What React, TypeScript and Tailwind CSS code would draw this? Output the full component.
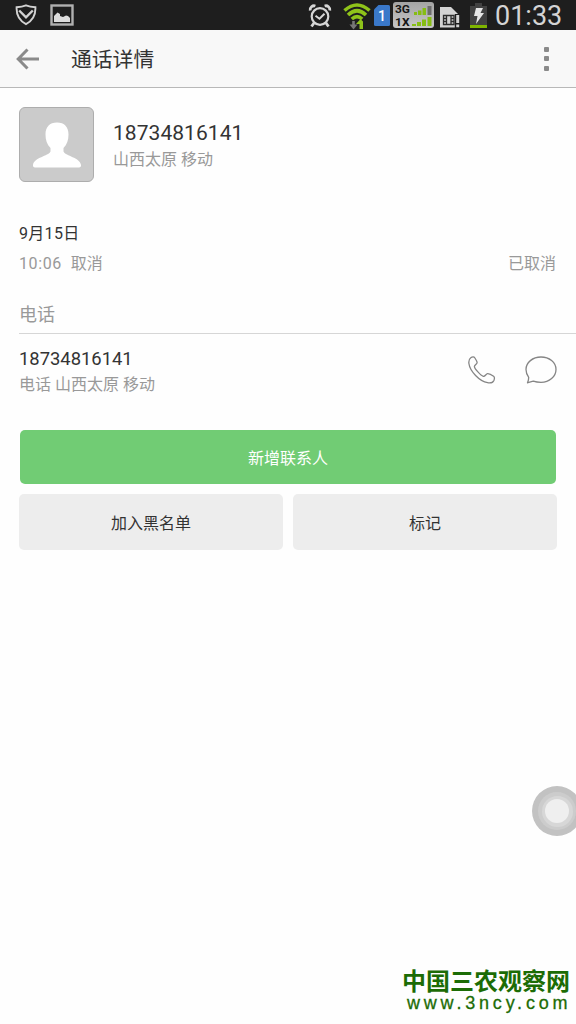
import React from 'react';

const ShieldIcon = () => (
  <svg width="22" height="22" viewBox="0 0 22 22" fill="none" stroke="#d2d2d2" strokeWidth="1.9">
    <path d="M11 1.4C8.2 2.6 5 3.1 1.6 3.2c-.4 7.4 2.2 13.2 9.4 17 7.2-3.8 9.8-9.6 9.4-17C17 3.1 13.8 2.6 11 1.4z" />
    <path d="M4.2 6.5l6.8 6.8 6.8-6.8" strokeWidth="2.4" />
  </svg>
);

const PictureIcon = () => (
  <svg width="24" height="22" viewBox="0 0 24 22">
    <rect x="1.5" y="1.5" width="21" height="19" fill="#1e1e1e" stroke="#b0b0b0" strokeWidth="2.4" />
    <path d="M4 18v-6l2-2 1.500-1.500L10 10v2l3 1 3-1.500 2 .5 2 2V18z" fill="#dcdcdc" />
  </svg>
);

const AlarmIcon = () => (
  <svg width="24" height="26" viewBox="0 0 24 26" fill="none" stroke="#d6d6d6" strokeWidth="2.2">
    <circle cx="12" cy="13.5" r="8.3" />
    <path d="M2.200 7.500a4 4 0 0 1 5.200-4.500M21.800 7.500a4 4 0 0 0-5.200-4.500" strokeWidth="2.8" />
    <path d="M6 20l-2.500 3.500M18 20l2.500 3.500" strokeWidth="2.8" />
    <path d="M7.500 12.800l4 3 5-5" strokeWidth="2" />
  </svg>
);

const WifiIcon = () => (
  <svg width="28" height="28" viewBox="0 0 28 28" fill="none">
    <path d="M1.500 8.500Q14 -2.500 26.500 8.500M5 13Q14 4.500 23 13M8.800 17Q14 12.200 19.200 17" stroke="#8fc31a" strokeWidth="3.6" />
    <path d="M10.500 19v5" stroke="#777" strokeWidth="2.6" />
    <path d="M6.500 22.500h8l-4 5z" fill="#777" />
    <path d="M13 22l4.500-5 2.500 2.500V27h-3.500v-5z" fill="#8fc31a" />
  </svg>
);

const SimBadge = () => (
  <svg width="16" height="21" viewBox="0 0 16 21">
    <path d="M4.500 0H14.500a1.500 1.500 0 0 1 1.500 1.500v18a1.500 1.500 0 0 1-1.500 1.500h-13A1.500 1.500 0 0 1 0 19.500V4.500z" fill="#3a78c9" />
    <text x="8" y="15.5" textAnchor="middle" fontSize="14" fontWeight="500" fill="#fff" className="font-['Roboto',sans-serif]">1</text>
  </svg>
);

const SignalIcon = () => (
  <svg width="41" height="27" viewBox="0 0 41 27">
    <defs>
      <linearGradient id="plate" x1="0" y1="0" x2="0" y2="1">
        <stop offset="0" stopColor="#a4a4a4" />
        <stop offset="1" stopColor="#c8c8c8" />
      </linearGradient>
    </defs>
    <rect width="41" height="26" rx="3" fill="url(#plate)" />
    <g fontSize="10.5" fontWeight="700" fill="#151515" className="font-['Roboto',sans-serif]">
      <text x="2" y="11" textLength="15" lengthAdjust="spacingAndGlyphs">3G</text>
      <text x="2" y="23.5" textLength="14.5" lengthAdjust="spacingAndGlyphs">1X</text>
    </g>
    <path d="M21 10h3v3h-3zM25 8.500h3.500V13H25zM29.500 6H33v7h-3.500zM19 22h4v2h-4zM24 20h4v4h-4zM29 17.500h4V24h-4zM34.500 15H38.500v9h-4z" fill="#86bd13" />
    <path d="M34.500 4h4v9h-4z" fill="#6c6c6c" />
  </svg>
);

const SimCardIcon = () => (
  <svg width="20" height="22" viewBox="0 0 20 22">
    <path d="M0 1h11l7 7v13.500H0z" fill="#d3d3d3" />
    <path d="M3.500 9.500h10.500v9H3.500zM6.500 9.500v9M11 9.500v9M3.500 12.500h3M11 12.500h3M3.500 15.500h3M11 15.500h3" fill="none" stroke="#2d2d2d" strokeWidth="1.3" />
    <rect x="14.8" y="8" width="5.2" height="14" fill="#1e1e1e" />
    <path d="M16.200 9h3v8h-3zM16.200 18.500h3v2.700h-3z" fill="#d3d3d3" />
  </svg>
);

const BatteryIcon = () => (
  <svg width="17" height="25" viewBox="0 0 17 25">
    <path d="M5 0h7v3h5v19H0V3h5z" fill="#414141" />
    <rect y="22" width="17" height="3" fill="#7fb500" />
    <path d="M6 5h7l-2.500 5H14L6 21l1.500-8H4z" fill="#e6e6e6" />
  </svg>
);

const BackIcon = () => (
  <svg width="24" height="22" viewBox="0 0 24 22" fill="none" stroke="#8a8a8a" strokeWidth="3">
    <path d="M11.500 1.500L2.200 11l9.300 9.500M2.500 11H23" />
  </svg>
);

const PhoneIcon = () => (
  <svg width="28" height="28" viewBox="0 0 28 28" fill="none" stroke="#858585" strokeWidth="1.3" strokeLinejoin="round">
    <path d="M2.800 1.800C4.300.7 6 .6 6.900 2c1 1.500 2.300 3.500 2.200 4.700-.1 1.300-2.700 2.300-2.700 3.700 0 2.100 6.400 9.200 8.900 9.900 1.700.5 2.700-2.400 4.200-2.600 1.400-.2 4.600 1.500 6.100 2.600.8.600.9 2.600.3 4.100-.9 2.100-3.600 2.800-6.300 2.300C11.500 25.300 1.900 15.200.9 7.500.6 5.200 1.100 3 2.800 1.800z" />
  </svg>
);

const MessageIcon = () => (
  <svg width="32" height="28" viewBox="0 0 32 28" fill="none" stroke="#858585" strokeWidth="1.3" strokeLinejoin="round">
    <path d="M16 1C7.700 1 1 6.500 1 13.500c0 3.200 1 5.600 2.700 7.800.1 2-.4 3.500-1.200 5.500 2-.3 4-1.300 5.800-1.600 2.300.8 4.900 1.200 7.700 1.200 8.300 0 15-5.800 15-12.900S24.300 1 16 1z" />
  </svg>
);

const StatusBar: React.FC = () => (
  <div className="flex h-[30px] items-center bg-[#1e1e1e] pl-[15px]">
    <ShieldIcon />
    <div className="ml-[13px]">
      <PictureIcon />
    </div>
    <div className="ml-[234px] mt-0.5">
      <AlarmIcon />
    </div>
    <div className="ml-[11px] mt-0.5">
      <WifiIcon />
    </div>
    <div className="ml-[3px]">
      <SimBadge />
    </div>
    <div className="ml-[3px]">
      <SignalIcon />
    </div>
    <div className="ml-1.5 mt-1">
      <SimCardIcon />
    </div>
    <div className="ml-2.5 mt-px">
      <BatteryIcon />
    </div>
    <span className="ml-2 mt-0.5 text-[27px] leading-[26px] text-[#d4d4d4]">01:33</span>
  </div>
);

const Header: React.FC = () => (
  <header className="flex h-[58px] items-center border-b border-[#b8b8b8] bg-[#f8f8f8] pl-4 pr-[27px]">
    <button aria-label="返回">
      <BackIcon />
    </button>
    <h1 className="ml-[31px] mt-0.5 flex-1 text-[20.8px] leading-6 text-[#333]">通话详情</h1>
    <button aria-label="更多" className="flex flex-col gap-[4.5px]">
      <span className="size-[5px] rounded-[1px] bg-[#8a8a8a]" />
      <span className="size-[5px] rounded-[1px] bg-[#8a8a8a]" />
      <span className="size-[5px] rounded-[1px] bg-[#8a8a8a]" />
    </button>
  </header>
);

const App: React.FC = () => {
  return (
    <div className="relative h-[1024px] w-[576px] overflow-hidden bg-[#fefefe] font-['Roboto','Noto_Sans_CJK_SC',sans-serif] text-[#333]">
      <StatusBar />
      <Header />

      <main className="pl-[19px]">
        {/* Contact */}
        <section className="flex pt-[19px]">
          <div className="flex size-[75px] items-center justify-center rounded-md border border-[#adadad] bg-[#cbcbcb]">
            <svg width="50" height="48" viewBox="0 0 50 48" fill="#fff">
              <path d="M25 1.500c7.500 0 11.500 4.500 11.500 12 0 5.500-1.500 10-5 13.500V30.500C34 35.500 47.500 36 49 44c.2 1.500-.5 2.500-2 2.500H3c-1.500 0-2.200-1-2-2.500 1.500-8 15-8.500 17.500-13.500V27c-3.500-3.500-5-8-5-13.500 0-7.500 4-12 11.500-12z" />
            </svg>
          </div>
          <div className="pl-[19px] pt-[13px]">
            <div className="text-[21px] leading-[26px] tracking-[0.05px]">18734816141</div>
            <div className="mt-px text-base leading-[26px] text-[#999]">山西太原 移动</div>
          </div>
        </section>

        {/* Call history */}
        <section className="pr-5 pt-[37px] text-base">
          <div className="leading-[30px] tracking-[0.3px]">9月15日</div>
          <div className="flex justify-between leading-[30px] text-[#999]">
            <div className="flex gap-[9px]">
              <span className="tracking-[0.6px]">10:06</span>
              <span>取消</span>
            </div>
            <span>已取消</span>
          </div>
        </section>

        {/* Numbers */}
        <section>
          <h2 className="mt-5 border-b border-[#d6d6d6] pb-1 pt-px text-[18px] leading-[29px] text-[#999]">电话</h2>
          <div className="flex items-center pr-[19px] pt-[13px]">
            <div className="flex-1">
              <div className="text-[18.4px] leading-6">18734816141</div>
              <div className="mt-px text-base leading-[26px] text-[#999]">电话 山西太原 移动</div>
            </div>
            <button aria-label="拨打" className="-mt-[5px] mr-[29px]">
              <PhoneIcon />
            </button>
            <button aria-label="短信" className="-mt-[5px]">
              <MessageIcon />
            </button>
          </div>
        </section>

        {/* Actions */}
        <section className="pr-[19px] pt-8 text-base">
          <button className="ml-px h-[54px] w-[536px] rounded-[5px] bg-[#71cc74] pt-1 text-white">新增联系人</button>
          <div className="mt-2.5 grid grid-cols-2 gap-2.5">
            <button className="h-14 rounded-[5px] bg-[#ededed] pt-1">加入黑名单</button>
            <button className="h-14 rounded-[5px] bg-[#ededed] pt-1">标记</button>
          </div>
        </section>
      </main>

      {/* Floating assistive button */}
      <div className="absolute left-[532px] top-[786px] flex size-[50px] items-center justify-center rounded-full bg-[#c2c2c2]">
        <div className="flex size-[38px] items-center justify-center rounded-full bg-[#cccccc]">
          <div className="flex size-[31px] items-center justify-center rounded-full bg-[#d7d7d7]">
            <div className="size-6 rounded-full bg-[#efefef]" />
          </div>
        </div>
      </div>

      {/* Watermark */}
      <div className="absolute left-[402px] top-[967px] whitespace-nowrap text-[#1c6c05]">
        <div className="font-['Noto_Sans_CJK_SC',sans-serif] text-[24px] font-bold leading-[25px]">中国三农观察网</div>
        <div className="mt-0.5 pl-[5px] font-['Liberation_Sans',sans-serif] text-[18px] leading-[18px] tracking-[3.8px] [-webkit-text-stroke:0.3px_#1c6c05]">www.3ncy.com</div>
      </div>
    </div>
  );
};

export default App;
